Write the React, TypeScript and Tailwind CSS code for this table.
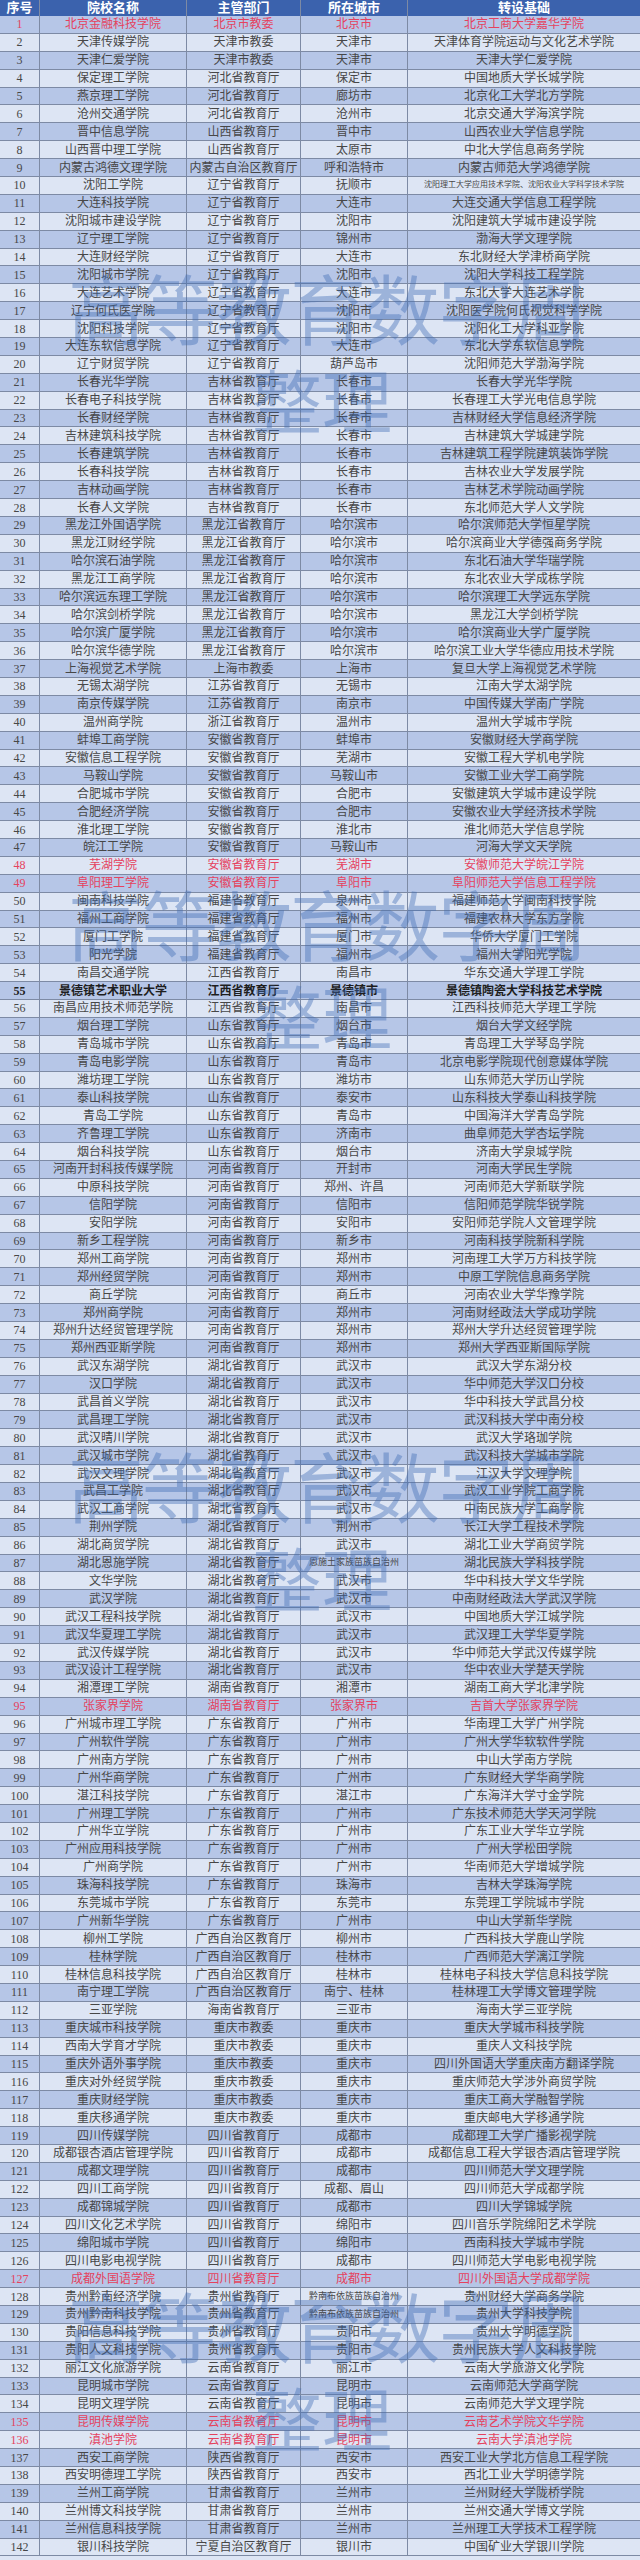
import React from 'react';

type Row = [string, string, string, string];

// row data: 院校名称 | 主管部门 | 所在城市 | 转设基础
const rows: Row[] = [
  ['北京金融科技学院', '北京市教委', '北京市', '北京工商大学嘉华学院'],
  ['天津传媒学院', '天津市教委', '天津市', '天津体育学院运动与文化艺术学院'],
  ['天津仁爱学院', '天津市教委', '天津市', '天津大学仁爱学院'],
  ['保定理工学院', '河北省教育厅', '保定市', '中国地质大学长城学院'],
  ['燕京理工学院', '河北省教育厅', '廊坊市', '北京化工大学北方学院'],
  ['沧州交通学院', '河北省教育厅', '沧州市', '北京交通大学海滨学院'],
  ['晋中信息学院', '山西省教育厅', '晋中市', '山西农业大学信息学院'],
  ['山西晋中理工学院', '山西省教育厅', '太原市', '中北大学信息商务学院'],
  ['内蒙古鸿德文理学院', '内蒙古自治区教育厅', '呼和浩特市', '内蒙古师范大学鸿德学院'],
  ['沈阳工学院', '辽宁省教育厅', '抚顺市', '沈阳理工大学应用技术学院、沈阳农业大学科学技术学院'],
  ['大连科技学院', '辽宁省教育厅', '大连市', '大连交通大学信息工程学院'],
  ['沈阳城市建设学院', '辽宁省教育厅', '沈阳市', '沈阳建筑大学城市建设学院'],
  ['辽宁理工学院', '辽宁省教育厅', '锦州市', '渤海大学文理学院'],
  ['大连财经学院', '辽宁省教育厅', '大连市', '东北财经大学津桥商学院'],
  ['沈阳城市学院', '辽宁省教育厅', '沈阳市', '沈阳大学科技工程学院'],
  ['大连艺术学院', '辽宁省教育厅', '大连市', '东北大学大连艺术学院'],
  ['辽宁何氏医学院', '辽宁省教育厅', '沈阳市', '沈阳医学院何氏视觉科学学院'],
  ['沈阳科技学院', '辽宁省教育厅', '沈阳市', '沈阳化工大学科亚学院'],
  ['大连东软信息学院', '辽宁省教育厅', '大连市', '东北大学东软信息学院'],
  ['辽宁财贸学院', '辽宁省教育厅', '葫芦岛市', '沈阳师范大学渤海学院'],
  ['长春光华学院', '吉林省教育厅', '长春市', '长春大学光华学院'],
  ['长春电子科技学院', '吉林省教育厅', '长春市', '长春理工大学光电信息学院'],
  ['长春财经学院', '吉林省教育厅', '长春市', '吉林财经大学信息经济学院'],
  ['吉林建筑科技学院', '吉林省教育厅', '长春市', '吉林建筑大学城建学院'],
  ['长春建筑学院', '吉林省教育厅', '长春市', '吉林建筑工程学院建筑装饰学院'],
  ['长春科技学院', '吉林省教育厅', '长春市', '吉林农业大学发展学院'],
  ['吉林动画学院', '吉林省教育厅', '长春市', '吉林艺术学院动画学院'],
  ['长春人文学院', '吉林省教育厅', '长春市', '东北师范大学人文学院'],
  ['黑龙江外国语学院', '黑龙江省教育厅', '哈尔滨市', '哈尔滨师范大学恒星学院'],
  ['黑龙江财经学院', '黑龙江省教育厅', '哈尔滨市', '哈尔滨商业大学德强商务学院'],
  ['哈尔滨石油学院', '黑龙江省教育厅', '哈尔滨市', '东北石油大学华瑞学院'],
  ['黑龙江工商学院', '黑龙江省教育厅', '哈尔滨市', '东北农业大学成栋学院'],
  ['哈尔滨远东理工学院', '黑龙江省教育厅', '哈尔滨市', '哈尔滨理工大学远东学院'],
  ['哈尔滨剑桥学院', '黑龙江省教育厅', '哈尔滨市', '黑龙江大学剑桥学院'],
  ['哈尔滨广厦学院', '黑龙江省教育厅', '哈尔滨市', '哈尔滨商业大学广厦学院'],
  ['哈尔滨华德学院', '黑龙江省教育厅', '哈尔滨市', '哈尔滨工业大学华德应用技术学院'],
  ['上海视觉艺术学院', '上海市教委', '上海市', '复旦大学上海视觉艺术学院'],
  ['无锡太湖学院', '江苏省教育厅', '无锡市', '江南大学太湖学院'],
  ['南京传媒学院', '江苏省教育厅', '南京市', '中国传媒大学南广学院'],
  ['温州商学院', '浙江省教育厅', '温州市', '温州大学城市学院'],
  ['蚌埠工商学院', '安徽省教育厅', '蚌埠市', '安徽财经大学商学院'],
  ['安徽信息工程学院', '安徽省教育厅', '芜湖市', '安徽工程大学机电学院'],
  ['马鞍山学院', '安徽省教育厅', '马鞍山市', '安徽工业大学工商学院'],
  ['合肥城市学院', '安徽省教育厅', '合肥市', '安徽建筑大学城市建设学院'],
  ['合肥经济学院', '安徽省教育厅', '合肥市', '安徽农业大学经济技术学院'],
  ['淮北理工学院', '安徽省教育厅', '淮北市', '淮北师范大学信息学院'],
  ['皖江工学院', '安徽省教育厅', '马鞍山市', '河海大学文天学院'],
  ['芜湖学院', '安徽省教育厅', '芜湖市', '安徽师范大学皖江学院'],
  ['阜阳理工学院', '安徽省教育厅', '阜阳市', '阜阳师范大学信息工程学院'],
  ['闽南科技学院', '福建省教育厅', '泉州市', '福建师范大学闽南科技学院'],
  ['福州工商学院', '福建省教育厅', '福州市', '福建农林大学东方学院'],
  ['厦门工学院', '福建省教育厅', '厦门市', '华侨大学厦门工学院'],
  ['阳光学院', '福建省教育厅', '福州市', '福州大学阳光学院'],
  ['南昌交通学院', '江西省教育厅', '南昌市', '华东交通大学理工学院'],
  ['景德镇艺术职业大学', '江西省教育厅', '景德镇市', '景德镇陶瓷大学科技艺术学院'],
  ['南昌应用技术师范学院', '江西省教育厅', '南昌市', '江西科技师范大学理工学院'],
  ['烟台理工学院', '山东省教育厅', '烟台市', '烟台大学文经学院'],
  ['青岛城市学院', '山东省教育厅', '青岛市', '青岛理工大学琴岛学院'],
  ['青岛电影学院', '山东省教育厅', '青岛市', '北京电影学院现代创意媒体学院'],
  ['潍坊理工学院', '山东省教育厅', '潍坊市', '山东师范大学历山学院'],
  ['泰山科技学院', '山东省教育厅', '泰安市', '山东科技大学泰山科技学院'],
  ['青岛工学院', '山东省教育厅', '青岛市', '中国海洋大学青岛学院'],
  ['齐鲁理工学院', '山东省教育厅', '济南市', '曲阜师范大学杏坛学院'],
  ['烟台科技学院', '山东省教育厅', '烟台市', '济南大学泉城学院'],
  ['河南开封科技传媒学院', '河南省教育厅', '开封市', '河南大学民生学院'],
  ['中原科技学院', '河南省教育厅', '郑州、许昌', '河南师范大学新联学院'],
  ['信阳学院', '河南省教育厅', '信阳市', '信阳师范学院华锐学院'],
  ['安阳学院', '河南省教育厅', '安阳市', '安阳师范学院人文管理学院'],
  ['新乡工程学院', '河南省教育厅', '新乡市', '河南科技学院新科学院'],
  ['郑州工商学院', '河南省教育厅', '郑州市', '河南理工大学万方科技学院'],
  ['郑州经贸学院', '河南省教育厅', '郑州市', '中原工学院信息商务学院'],
  ['商丘学院', '河南省教育厅', '商丘市', '河南农业大学华豫学院'],
  ['郑州商学院', '河南省教育厅', '郑州市', '河南财经政法大学成功学院'],
  ['郑州升达经贸管理学院', '河南省教育厅', '郑州市', '郑州大学升达经贸管理学院'],
  ['郑州西亚斯学院', '河南省教育厅', '郑州市', '郑州大学西亚斯国际学院'],
  ['武汉东湖学院', '湖北省教育厅', '武汉市', '武汉大学东湖分校'],
  ['汉口学院', '湖北省教育厅', '武汉市', '华中师范大学汉口分校'],
  ['武昌首义学院', '湖北省教育厅', '武汉市', '华中科技大学武昌分校'],
  ['武昌理工学院', '湖北省教育厅', '武汉市', '武汉科技大学中南分校'],
  ['武汉晴川学院', '湖北省教育厅', '武汉市', '武汉大学珞珈学院'],
  ['武汉城市学院', '湖北省教育厅', '武汉市', '武汉科技大学城市学院'],
  ['武汉文理学院', '湖北省教育厅', '武汉市', '江汉大学文理学院'],
  ['武昌工学院', '湖北省教育厅', '武汉市', '武汉工业学院工商学院'],
  ['武汉工商学院', '湖北省教育厅', '武汉市', '中南民族大学工商学院'],
  ['荆州学院', '湖北省教育厅', '荆州市', '长江大学工程技术学院'],
  ['湖北商贸学院', '湖北省教育厅', '武汉市', '湖北工业大学商贸学院'],
  ['湖北恩施学院', '湖北省教育厅', '恩施土家族苗族自治州', '湖北民族大学科技学院'],
  ['文华学院', '湖北省教育厅', '武汉市', '华中科技大学文华学院'],
  ['武汉学院', '湖北省教育厅', '武汉市', '中南财经政法大学武汉学院'],
  ['武汉工程科技学院', '湖北省教育厅', '武汉市', '中国地质大学江城学院'],
  ['武汉华夏理工学院', '湖北省教育厅', '武汉市', '武汉理工大学华夏学院'],
  ['武汉传媒学院', '湖北省教育厅', '武汉市', '华中师范大学武汉传媒学院'],
  ['武汉设计工程学院', '湖北省教育厅', '武汉市', '华中农业大学楚天学院'],
  ['湘潭理工学院', '湖南省教育厅', '湘潭市', '湖南工商大学北津学院'],
  ['张家界学院', '湖南省教育厅', '张家界市', '吉首大学张家界学院'],
  ['广州城市理工学院', '广东省教育厅', '广州市', '华南理工大学广州学院'],
  ['广州软件学院', '广东省教育厅', '广州市', '广州大学华软软件学院'],
  ['广州南方学院', '广东省教育厅', '广州市', '中山大学南方学院'],
  ['广州华商学院', '广东省教育厅', '广州市', '广东财经大学华商学院'],
  ['湛江科技学院', '广东省教育厅', '湛江市', '广东海洋大学寸金学院'],
  ['广州理工学院', '广东省教育厅', '广州市', '广东技术师范大学天河学院'],
  ['广州华立学院', '广东省教育厅', '广州市', '广东工业大学华立学院'],
  ['广州应用科技学院', '广东省教育厅', '广州市', '广州大学松田学院'],
  ['广州商学院', '广东省教育厅', '广州市', '华南师范大学增城学院'],
  ['珠海科技学院', '广东省教育厅', '珠海市', '吉林大学珠海学院'],
  ['东莞城市学院', '广东省教育厅', '东莞市', '东莞理工学院城市学院'],
  ['广州新华学院', '广东省教育厅', '广州市', '中山大学新华学院'],
  ['柳州工学院', '广西自治区教育厅', '柳州市', '广西科技大学鹿山学院'],
  ['桂林学院', '广西自治区教育厅', '桂林市', '广西师范大学漓江学院'],
  ['桂林信息科技学院', '广西自治区教育厅', '桂林市', '桂林电子科技大学信息科技学院'],
  ['南宁理工学院', '广西自治区教育厅', '南宁、桂林', '桂林理工大学博文管理学院'],
  ['三亚学院', '海南省教育厅', '三亚市', '海南大学三亚学院'],
  ['重庆城市科技学院', '重庆市教委', '重庆市', '重庆大学城市科技学院'],
  ['西南大学育才学院', '重庆市教委', '重庆市', '重庆人文科技学院'],
  ['重庆外语外事学院', '重庆市教委', '重庆市', '四川外国语大学重庆南方翻译学院'],
  ['重庆对外经贸学院', '重庆市教委', '重庆市', '重庆师范大学涉外商贸学院'],
  ['重庆财经学院', '重庆市教委', '重庆市', '重庆工商大学融智学院'],
  ['重庆移通学院', '重庆市教委', '重庆市', '重庆邮电大学移通学院'],
  ['四川传媒学院', '四川省教育厅', '成都市', '成都理工大学广播影视学院'],
  ['成都银杏酒店管理学院', '四川省教育厅', '成都市', '成都信息工程大学银杏酒店管理学院'],
  ['成都文理学院', '四川省教育厅', '成都市', '四川师范大学文理学院'],
  ['四川工商学院', '四川省教育厅', '成都、眉山', '四川师范大学成都学院'],
  ['成都锦城学院', '四川省教育厅', '成都市', '四川大学锦城学院'],
  ['四川文化艺术学院', '四川省教育厅', '绵阳市', '四川音乐学院绵阳艺术学院'],
  ['绵阳城市学院', '四川省教育厅', '绵阳市', '西南科技大学城市学院'],
  ['四川电影电视学院', '四川省教育厅', '成都市', '四川师范大学电影电视学院'],
  ['成都外国语学院', '四川省教育厅', '成都市', '四川外国语大学成都学院'],
  ['贵州黔南经济学院', '贵州省教育厅', '黔南布依族苗族自治州', '贵州财经大学商务学院'],
  ['贵州黔南科技学院', '贵州省教育厅', '黔南布依族苗族自治州', '贵州大学科技学院'],
  ['贵阳信息科技学院', '贵州省教育厅', '贵阳市', '贵州大学明德学院'],
  ['贵阳人文科技学院', '贵州省教育厅', '贵阳市', '贵州民族大学人文科技学院'],
  ['丽江文化旅游学院', '云南省教育厅', '丽江市', '云南大学旅游文化学院'],
  ['昆明城市学院', '云南省教育厅', '昆明市', '云南师范大学商学院'],
  ['昆明文理学院', '云南省教育厅', '昆明市', '云南师范大学文理学院'],
  ['昆明传媒学院', '云南省教育厅', '昆明市', '云南艺术学院文华学院'],
  ['滇池学院', '云南省教育厅', '昆明市', '云南大学滇池学院'],
  ['西安工商学院', '陕西省教育厅', '西安市', '西安工业大学北方信息工程学院'],
  ['西安明德理工学院', '陕西省教育厅', '西安市', '西北工业大学明德学院'],
  ['兰州工商学院', '甘肃省教育厅', '兰州市', '兰州财经大学陇桥学院'],
  ['兰州博文科技学院', '甘肃省教育厅', '兰州市', '兰州交通大学博文学院'],
  ['兰州信息科技学院', '甘肃省教育厅', '兰州市', '兰州理工大学技术工程学院'],
  ['银川科技学院', '宁夏自治区教育厅', '银川市', '中国矿业大学银川学院'],
];

const redRows = [1, 48, 49, 95, 127, 135, 136];
const boldRows = [55];

// watermark blocks, top offsets in px
const marks = [268, 884, 1446, 2286];

const cols = 'grid grid-cols-[40px_147px_114px_107px_232px]';
const cell = 'flex items-center justify-center whitespace-nowrap overflow-hidden border-r border-[#7d8aa4]';

function Row({ no, data }: { no: number; data: Row }) {
  const red = redRows.includes(no);
  const bold = boldRows.includes(no);
  const bg = no % 2 === 1 ? 'bg-[#b6c6e7]' : 'bg-[#dde5f4]';
  const color = red ? 'text-[#e5425e]' : bold ? 'text-[#1e1e1e] font-bold' : 'text-[#474747]';
  const cityLong = data[2].length > 8;
  const baseLong = data[3].length > 18;

  return (
    <div className={`${cols} h-[17.9px] border-b border-[#7d8aa4] text-[12px] ${bg} ${color}`}>
      <div className={cell}>{no}</div>
      <div className={cell}>{data[0]}</div>
      <div className={cell}>{data[1]}</div>
      <div className={`${cell} ${cityLong ? 'text-[9px]' : ''}`}>{data[2]}</div>
      <div className={`${cell} border-r-0 ${baseLong ? 'text-[8px]' : ''}`}>{data[3]}</div>
    </div>
  );
}

export default function App() {
  return (
    <div
      className="relative w-[640px] h-[2560px] overflow-hidden bg-[#dde5f4]"
      style={{ fontFamily: '"Liberation Serif", "Noto Sans CJK SC", serif' }}
    >
      {/* Header */}
      <div className={`${cols} h-[16px] bg-[#3b62ad] text-white font-bold text-[13px]`}>
        <div className={`${cell} border-[#6f8ccc]`}>序号</div>
        <div className={`${cell} border-[#6f8ccc]`}>院校名称</div>
        <div className={`${cell} border-[#6f8ccc]`}>主管部门</div>
        <div className={`${cell} border-[#6f8ccc]`}>所在城市</div>
        <div className={`${cell} border-r-0`}>转设基础</div>
      </div>

      {rows.map((r, i) => (
        <Row key={i} no={i + 1} data={r} />
      ))}

      {/* Watermarks */}
      {marks.map((top) => (
        <div
          key={top}
          className="pointer-events-none absolute left-0 w-full text-[#3d68b3]/40 leading-none"
          style={{ top, fontFamily: '"Noto Sans CJK SC", sans-serif' }}
        >
          <div className="pl-[68px] text-[76px] tracking-[-2px]">高等教育数字周</div>
          <div className="pl-[252px] pt-[20px] text-[70px]">整理</div>
        </div>
      ))}
    </div>
  );
}
